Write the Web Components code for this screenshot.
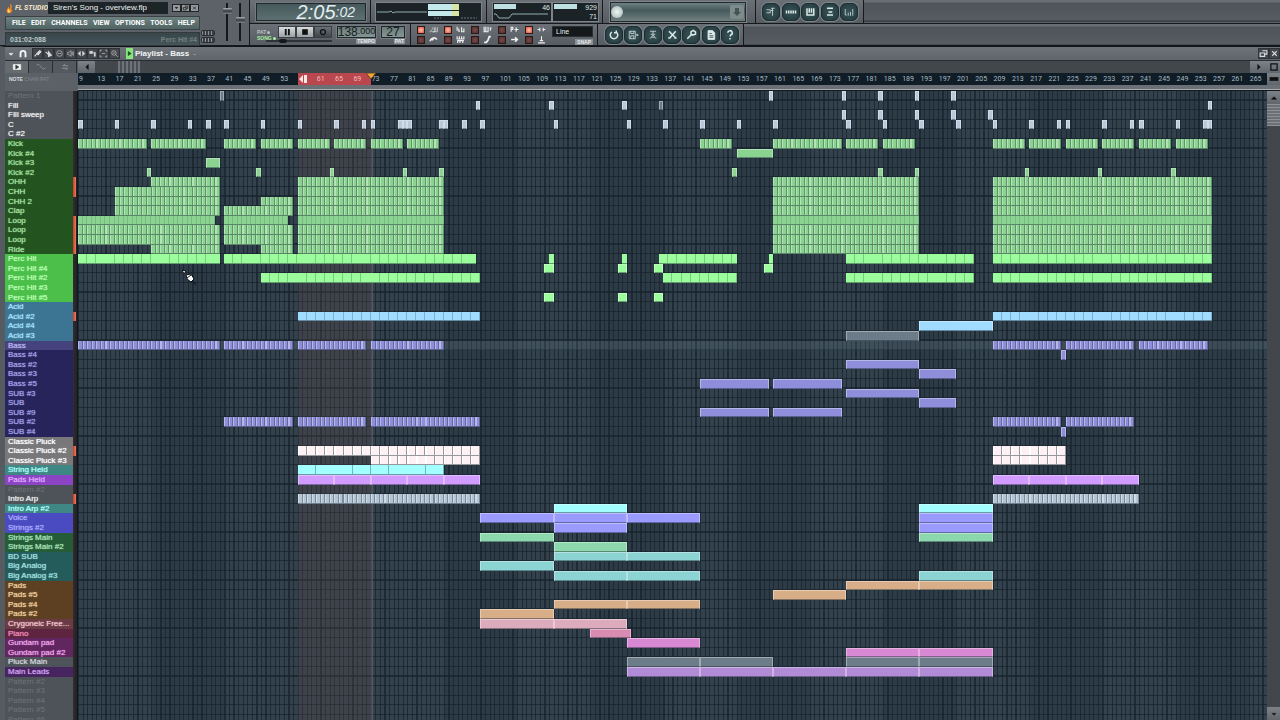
<!DOCTYPE html>
<html lang="en">
<head>
<meta charset="utf-8">
<title>FL Studio - Siren's Song</title>
<style>
html,body{margin:0;height:100%;overflow:hidden;background:#575d63}
body{font-family:"Liberation Sans",Arial,sans-serif}
</style>
</head>
<body>
<fl-app></fl-app>
<script>
const ICONS = {
  playlist:'<path d="M2 5h5v4H2M10 13V3M8 3h5M8 6h3"/>',
  steps:'<path d="M2 6v4M5 6v4M8 6v4M11 6v4M14 6v4" stroke-width="2"/>',
  piano:'<path d="M4 3v9h9V3M7 3v6M10 3v6" stroke-width="2"/>',
  browser:'<path d="M4 3h8M6 8h5M4 12h8" stroke-width="2"/>',
  mixer:'<path d="M3 4v8h2M7 9v4M10 8v5M13 4v9" />',
  undo:'<path d="M5 4a5 5 0 1 0 6 0M11 2v3H8" stroke-width="2"/>',
  save:'<path d="M3 3h8v10H3zM5 3v3h4V3M5 13V9h4v4M13 7l2 1-2 1z"/>',
  wave:'<path d="M4 3h8M8 3v4M5 7h6M8 8l-4 5M8 8l4 5M6 11h4"/>',
  cut:'<path d="M4 3l9 9M13 3L5 12M3 12h3M11 12h3" stroke-width="2"/>',
  wrench:'<path d="M3 13l6-6M8 7V4l3-2 3 2v3l-3 1z" stroke-width="2"/>',
  page:'<path d="M4 2h6l3 3v9H4z" fill="currentColor"/><path d="M6 6h3M6 9h5M6 11h5" stroke="#22383c"/>',
  help:'<path d="M5 5a3 3 0 1 1 4 3l-1 2M8 12v2" stroke-width="2"/>',
  down:'<path d="M5 7l3 3 3-3z" fill="currentColor"/>',
  magnet:'<path d="M4 13V7a4 4 0 0 1 8 0v6" stroke-width="3"/>',
  brush:'<path d="M3 13l4-5M7 8l5-5 2 2-5 5z" fill="currentColor" stroke-width="2"/>',
  pencil:'<path d="M3 5l6 6M8 5l5 6-5 2z" fill="currentColor" stroke-width="2"/>',
  none:'<circle cx="8" cy="8" r="5"/><path d="M5 8h6"/>',
  mute:'<path d="M3 6h2l4-3v10l-4-3H3zM11 5v6M13 4v8"/>',
  slip:'<path d="M6 4L2 8l4 4zM10 4l4 4-4 4z" fill="currentColor"/>',
  slice:'<path d="M3 4h5v4H3zM9 6h4v7h-2V9" fill="currentColor"/>',
  select:'<path d="M2 5V2h3M11 2h3v3M14 11v3h-3M5 14H2v-3M5 8h6"/>',
  zoom:'<circle cx="7" cy="7" r="4"/><path d="M10 10l4 4M5 7h4" />',
  pause:'<path d="M6 3v10M11 3v10" stroke-width="3"/>',
  stop:'<path d="M4 4h8v8H4z" fill="currentColor"/>',
  rec:'<circle cx="8" cy="8" r="4" stroke-width="2"/>',
  clip:'<path d="M2 4h12v8H2z" fill="currentColor"/><path d="M6 5l5 3-5 3z" fill="#333" stroke="#333"/>',
  curve:'<path d="M1 5c4-3 5 1 7 3s4 5 7 1"/>',
  swap:'<path d="M3 10h9l-3 3M13 6H5l3-3"/>',
  min:'<path d="M4 6h8l-4 4z" fill="currentColor"/>',
  max:'<path d="M6 3h8v6h-3M2 7h8v6H2z" stroke-width="2"/>',
  close:'<path d="M4 4l8 8M12 4l-8 8" stroke-width="2"/>',
  square:'<path d="M3 3h10v10H3z" stroke-width="2"/>',
  bar:'<path d="M1 8h14" stroke-width="6"/>',
  up:'<path d="M4 10h8L8 6z" fill="currentColor"/>',
  left:'<path d="M10 4v8L6 8z" fill="currentColor"/>',
  right:'<path d="M6 4v8l4-4z" fill="currentColor"/>',
  keys:'<path d="M1 12h3V8M6 12h4V4M7 4v5M12 4v8M15 4v8H6"/>',
  arcs:'<path d="M2 11c2-7 9-7 12-3M5 9l3-2" stroke-width="3"/>',
  notes:'<path d="M2 3v7M5 6v5h2M10 4v8h4V6" stroke-width="2"/>',
  rows:'<path d="M2 2v5h12V2M6 2v5M10 2v5M2 10h12M3 10v4M7 10v4M12 10v4" stroke-width="2"/>',
  grid3:'<path d="M2 3v9h7V3M5 3v9M12 6h3M13 4v6" stroke-width="2"/>',
  slope:'<path d="M2 13h4l3-4 2-6h3" stroke-width="3"/>',
  rplus:'<path d="M2 12V4h3v4H2M8 8h7M11 4v8" stroke-width="2"/>',
  arrow:'<path d="M2 8h10M9 4l4 4-4 4" stroke-width="3"/>',
  ends:'<path d="M1 8h5M10 8h5M5 5v6M11 5v6" stroke-width="2"/>',
  stand:'<path d="M8 2v8M5 10h6M2 14h12" stroke-width="2"/>'
};
const svg = n => `<svg viewBox="0 0 16 16" aria-hidden="true">${ICONS[n]}</svg>`;
const define = (name, markup, init) => customElements.define(name, class extends HTMLElement {
  connectedCallback() {
    if (this.shadowRoot) return;
    const root = this.attachShadow({mode:'open'});
    root.innerHTML = typeof markup === 'function' ? markup(this) : markup;
  }
});
const attr = (el, n, d = '') => el.getAttribute(n) ?? d;

/* Small button holding one icon; kind = round | flat | key | win | tab | fill */
define('fl-icon', el => `<style>
:host{display:block;width:12px;height:11px}
button{display:grid;place-items:center;width:100%;height:100%;padding:0;margin:0;border:0;background:none;color:inherit}
svg{width:10px;height:10px;fill:none;stroke:currentColor;stroke-width:1}
:host([kind=round]){width:18px;height:18px;color:#dce9e8}
:host([kind=round]) button{border-radius:6px;border:1px solid #1d2c2f;background:radial-gradient(#39555a,#22383c);box-shadow:0 0 0 1px #79868a}
:host([kind=round]) svg{width:12px;height:12px}
:host([kind=flat]){width:11px}
:host([kind=flat]) button{background:#43474c;border:1px solid #303438;color:#d8dcdd}
:host([kind=flat]) svg{width:9px;height:9px}
:host([kind=key]){width:18px;height:12px}
:host([kind=key]) button{background:linear-gradient(#d9dcde,#9ba1a5);color:#111;border:1px solid #3a4044}
:host([dim][kind=key]) button{background:linear-gradient(#6a7176,#3f4549)}
:host([kind=win]){width:9px;height:8px}
:host([kind=win]) button{background:#969b9f;color:#101416;border:1px solid #222}
:host([kind=win]) svg{width:7px;height:6px}
:host([kind=tab]){width:24px;height:12px}
:host([kind=tab]) button{background:#54595f;border-right:1px solid #2b2f33;color:#a9b0b4}
:host([kind=tab][on]) button{background:#646b71;color:#f2f4f4}
:host([kind=fill]){width:auto;height:auto}
:host([kind=fill]) button{background:linear-gradient(#7c8288,#60666c);color:#111}
</style><button aria-label="${attr(el,'name')}">${svg(attr(el,'name'))}</button>`);

define('fl-lcd', `<style>
:host{display:flex;align-items:center;justify-content:center;box-sizing:border-box;border:1px solid #20272b;background:linear-gradient(#46595c,#5c7072);color:#e4eeee;font-style:italic;box-shadow:0 0 0 1px #747b80}
</style><slot></slot>`);

/* Toolbar panel */
define('fl-panel', `<style>
:host{display:flex;align-items:center;box-sizing:border-box;height:100%;border-right:1px solid #16191c;border-bottom:1px solid #16191c;background:linear-gradient(#6b7076,#575c62)}
</style><slot></slot>`);

define('fl-main', `<style>
:host{display:flex;width:250px;box-sizing:border-box;background:#5d6268;border-right:1px solid #16191c;border-bottom:1px solid #16191c}
.left{width:193px;margin:2px 0 0 6px;display:flex;flex-direction:column;gap:3px}
.top{display:flex;align-items:center;height:12px}
.logo{display:flex;align-items:center;gap:2px;width:42px;height:12px;font:italic bold 7px Roboto,sans-serif;color:#f6e6c8;white-space:nowrap}
.logo svg{flex:none;width:7px;height:11px}
.title{flex:1;height:12px;line-height:12px;padding-left:5px;font-size:8px;color:#eef2f3;background:#1e2529;white-space:nowrap}
.win{display:flex;margin-left:4px}
nav{display:flex;justify-content:space-between;align-items:center;height:12px;padding:0 4px 0 6px;background:linear-gradient(#6c8180,#4f6463);box-shadow:0 0 0 1px #3a4043}
nav button{all:unset;font:bold 7px Roboto,sans-serif;color:#fff}
.hint{display:flex;justify-content:space-between;align-items:center;height:12px;margin-top:1px;padding:0 2px 0 4px;font-size:7px;font-weight:bold;color:#bfcac9;background:linear-gradient(#38464a,#45555a);box-shadow:0 0 0 1px #34393c}
.hint i{font-style:normal;color:#74817f}
.mid{width:16px;display:flex;flex-direction:column;justify-content:flex-end;gap:1px;padding:0 0 2px 2px;box-sizing:border-box}
.mid b{height:4px;border:1px solid #2a2e31;border-radius:2px;background:repeating-linear-gradient(90deg,#8d9498 0 1px,#3a3f43 1px 3px)}
.faders{display:flex;gap:1px;padding:3px 0 0 6px}
.faders input{appearance:none;writing-mode:vertical-lr;direction:rtl;width:12px;height:38px;margin:0;background:linear-gradient(90deg,transparent 5px,#16191c 5px 7px,transparent 7px)}
.faders input::-webkit-slider-thumb{appearance:none;width:9px;height:6px;background:linear-gradient(#aeb4b8,#33383b 50%,#7d8488);border-radius:1px}
</style>
<div class="left">
 <div class="top"><span class="logo"><svg viewBox="0 0 8 11"><path d="M5 0c2 2 2 4 1 6 2 1 1 4-2 5C1 11 0 9 1 7L3 3c0 2 1 2 1 3C6 4 4 2 5 0z" fill="#f58a1c"/><path d="M3 6c-2 2-1 4 1 4 1-1 0-2-1-4z" fill="#ffe17a"/></svg>FL STUDIO</span>
 <span class="title">Siren's Song - overview.flp</span>
 <span class="win"><fl-icon kind="win" name="min"></fl-icon><fl-icon kind="win" name="max"></fl-icon><fl-icon kind="win" name="close"></fl-icon></span></div>
 <nav><button>FILE</button><button>EDIT</button><button>CHANNELS</button><button>VIEW</button><button>OPTIONS</button><button>TOOLS</button><button>HELP</button></nav>
 <div class="hint"><span>031:02:088</span><i>Perc Hit #4</i></div>
</div>
<div class="mid"><b></b><b></b></div>
<div class="faders"><input type="range" value="84" aria-label="Main volume"><input type="range" value="56" aria-label="Main pitch"></div>`);

define('fl-transport', `<style>
:host{display:flex;align-items:center;gap:5px;width:160px;height:100%}
.col{display:flex;flex-direction:column;gap:1px}
.mode{display:flex;flex-direction:column;width:16px;margin-left:7px;font-size:5px;line-height:6px;font-weight:bold;color:#b9c0c3;white-space:nowrap}
.mode span:last-child{color:#a9f0a0}
.mode span::after{content:"";display:inline-block;width:3px;height:3px;border-radius:50%;background:currentColor;margin-left:1px}
.keys{display:flex}
input{appearance:none;width:66px;height:4px;margin:0 0 0 -12px;background:linear-gradient(transparent 1px,#2e3337 1px 3px,transparent 3px)}
input::-webkit-slider-thumb{appearance:none;width:8px;height:4px;border-radius:2px;background:#15181a}
fl-lcd{height:12px;font-size:12px;color:#16201f;font-style:normal;background:linear-gradient(#6b7b79,#859593)}
.t{width:39px}.p{width:24px}
small{font-size:9px;line-height:11px;align-self:end}
.cap{align-self:flex-end;font-size:5px;line-height:5px;font-weight:bold;color:#e3e7e9;background:#899095;padding:0 1px}
</style>
<div class="mode"><span>PAT</span><span>SONG</span></div>
<div class="col"><div class="keys"><fl-icon kind="key" name="pause"></fl-icon><fl-icon kind="key" name="stop"></fl-icon><fl-icon kind="key" dim name="rec"></fl-icon></div><input type="range" value="22" aria-label="Song position"></div>
<div class="col"><fl-lcd class="t">138<small>.000</small></fl-lcd><span class="cap">TEMPO</span></div>
<div class="col"><fl-lcd class="p">27</fl-lcd><span class="cap">PAT</span></div>`);

define('fl-switches', () => `<style>
:host{display:flex;align-items:center;width:186px;height:100%}
.g{display:grid;grid-template-columns:repeat(5,27px);row-gap:1px;margin-left:6px}
label{display:flex;align-items:center;gap:1px;color:#eef0f1}
input{appearance:none;width:8px;height:8px;margin:0;border:1px solid #2b1a1a;background:radial-gradient(#7c4a48,#4c2d2d)}
input:checked{background:radial-gradient(#ffc5b0,#e04b38)}
svg{width:15px;height:9px;fill:none;stroke:currentColor}
select{appearance:none;width:41px;height:11px;margin-bottom:9px;padding:0 3px;font:7px "Liberation Sans",sans-serif;color:#e5eaec;background:#15191c;border:1px solid #2c3033}
.s{display:flex;flex-direction:column;justify-content:center;padding-top:2px}
.s span{align-self:flex-end;margin-top:-7px;font-size:5px;line-height:6px;font-weight:bold;color:#e3e7e9;background:#899095;padding:0 2px}
</style><div class="g">${['keys*','notes*','grid3','rplus','ends*','arcs','rows','slope','arrow','stand'].map(n=>`<label><input type="checkbox" aria-label="${n.replace('*','')}" ${n.endsWith('*')?'checked':''}>${svg(n.replace('*',''))}</label>`).join('')}</div>
<div class="s"><select aria-label="Snap"><option>Line</option></select><span>SNAP</span></div>`);

define('fl-scope', `<style>
:host{display:block;width:105px;height:18px;margin:0 5px;background:#1c2326;box-shadow:0 0 0 1px #7d8489}
svg{display:block;width:100%;height:100%}
</style><svg viewBox="0 0 105 18" preserveAspectRatio="none"><path d="M1 9h12l2-1 2 2 2-1h32" stroke="#92aeb0" fill="none"/><path d="M52 1h24v6H52zM52 8h24v5H52z" fill="#c3e9ec"/><path d="M76 1h7v6h-7zM76 8h7v5h-7z" fill="#d8e6a5"/><path d="M58 15h7M85 15h16" stroke="#667477" stroke-dasharray="2 1"/></svg>`);

define('fl-cpu', `<style>
:host{display:grid;grid-template-columns:58px 45px;gap:2px;width:105px;height:18px;margin:0 4px 0 6px}
div{display:grid;grid-template-rows:9px 9px;box-sizing:border-box;padding-right:1px;background:#1c2326;box-shadow:0 0 0 1px #7d8489;color:#dfe8ea;font-size:7px;line-height:9px;text-align:right}
.a{background:linear-gradient(#bfe0e3,#bfe0e3) 1px 1px/22px 5px no-repeat #1c2326}
.b{background:linear-gradient(#bfe0e3,#bfe0e3) 1px 1px/23px 5px no-repeat #1c2326}
svg{width:57px;height:9px}
</style><div class="a"><span>46</span><svg viewBox="0 0 57 9"><path d="M1 2h2l3 4h10l3-4h36" stroke="#92aeb0" fill="none"/></svg></div><div class="b"><span>929</span><span>71</span></div>`);

define('fl-toolbar', `<style>
:host{display:flex;height:46px;background:#50565c}
.rows{flex:1;display:grid;grid-template-rows:24px 22px;min-width:0}
.row{display:flex;min-width:0}
.time{width:110px;height:18px;margin-left:6px;font-size:20px;line-height:18px;padding-right:10px;justify-content:flex-end}
.time small{font-size:14px;align-self:end;line-height:15px}
.p1{width:121px}
.hint{width:153px}
.long{appearance:none;flex:1;height:18px;margin:0 9px 0 7px;border:1px solid #23292c;background:linear-gradient(#6f8282,#46595b 40%,#70807f);box-shadow:0 0 0 1px #7d8489}
.long::-webkit-slider-thumb{appearance:none;width:12px;height:12px;border-radius:50%;background:radial-gradient(#eef6f4,#9fb2b0)}
.slide{display:grid;flex:1;align-items:center}
.slide>*{grid-area:1/1}
.slide svg{justify-self:end;width:14px;height:14px;margin-right:11px;background:#7d8c8b;border-radius:2px}
.w{width:108px;padding:0 5px 0 6px;justify-content:space-between}
.f{width:146px;padding:0 4px 0 7px;justify-content:space-between}
.rest{flex:1;border-bottom:1px solid #16191c;background:linear-gradient(#686e74 2px,#4e545a 3px,#565c62 20px,#30353a 21px,#686e74)}
</style>
<fl-main></fl-main>
<div class="rows">
<div class="row">
<fl-panel class="p1"><fl-lcd class="time">2:05<small>:02</small></fl-lcd></fl-panel>
<fl-panel><fl-scope></fl-scope></fl-panel><fl-panel><fl-cpu></fl-cpu></fl-panel>
<fl-panel class="hint"><div class="slide"><input class="long" type="range" value="0" aria-label="Hint"><svg viewBox="0 0 14 14"><path d="M5 3h4v4h2l-4 4-4-4h2z" fill="#455556"/></svg></div></fl-panel>
<fl-panel class="w"><fl-icon kind="round" name="playlist"></fl-icon><fl-icon kind="round" name="steps"></fl-icon><fl-icon kind="round" name="piano"></fl-icon><fl-icon kind="round" name="browser"></fl-icon><fl-icon kind="round" name="mixer"></fl-icon></fl-panel>
<div class="rest"></div></div>
<div class="row">
<fl-panel><fl-transport></fl-transport></fl-panel><fl-panel><fl-switches></fl-switches></fl-panel>
<fl-panel class="f"><fl-icon kind="round" name="undo"></fl-icon><fl-icon kind="round" name="save"></fl-icon><fl-icon kind="round" name="wave"></fl-icon><fl-icon kind="round" name="cut"></fl-icon><fl-icon kind="round" name="wrench"></fl-icon><fl-icon kind="round" name="page"></fl-icon><fl-icon kind="round" name="help"></fl-icon></fl-panel>
<div class="rest"></div></div>
</div>`);

/* Bars are counted from the first visible bar; the view is 260 bars wide */
const BARS = 260;
const C = {
  hit:'#b9c9da', kick:'#8bd390', perc:'#9bfd9b', acid:'#9fdcff', bass:'#8f8edb', white:'#fdf1f6',
  cyan:'#a3feff', purple:'#d29bff', arp:'#b4c4d4', voice:'#9b9bff', string:'#8cd8ac', teal:'#8cd3d3',
  pad:'#d8ae88', cryg:'#dcacbd', piano:'#d98cb2', gund:'#d988d3', grey:'#6c7c88', lead:'#b18bd6'
};
/* name, [label background, label colour], clip colour, stripe style, clips "start-end", activity marker */
const G=['#4d5358','#eceeee'], K=['#235420','#a6e2a0'], P=['#4bbf49','#b9ffb4'], A=['#3c7594','#a5e2ff'],
 B=['#26245b','#a39fe6'], W=['#78787a','#fff'], N=['#4d5358','#6d7479'], S=['#255c38','#a9e6b9'], T=['#245c5c','#a0e0e0'], D=['#5d4022','#f0cf9c'], V=['#4a4bc0','#a9aaff'], U=['#612660','#f0a5ec'];
const one = s => s.split(' ').map(n => n.startsWith('g') ? `${n}-${+n.slice(1)+1}` : `${n}-${+n+1}`).join(' ');
const big = ' 48-80 152-184 200-248';
const TRACKS = [
 ['Pattern 1',N,'hit','',one('g31 151 167 175 183 191')],
 ['Fill',G,'hit','',one('87 103 119 g127 247')],
 ['FIll sweep',G,'hit','',one('167 175 183 191 199')],
 ['C',G,'hit','',one('0 8 16 24 28 32 40 48 56 62 64 70 71 72 79 80 84 88 104 120 128 136 144 152 168 176 184 192 200 208 214 216 224 230 232 240 246 247')],
 ['C #2',G,'hit','',''],
 ['Kick',K,'kick','s','0-15 16-28 32-39 40-47 48-55 56-63 64-71 72-79 136-143 152-167 168-175 176-183 200-207 208-215 216-223 224-231 232-239 240-247'],
 ['Kick #4',K,'kick','','144-152'],
 ['Kick #3',K,'kick','','28-31'],
 ['Kick #2',K,'kick','',one('15 39 55 71 79 143 175 183 207 223 239')],
 ['OHH',K,'kick','s','16-31'+big,1],
 ['CHH',K,'kick','s','8-31'+big,1],
 ['CHH 2',K,'kick','s','8-31 40-47'+big],
 ['Clap',K,'kick','s','8-31 32-47'+big],
 ['Loop',K,'kick','f','0-30 32-46'+big,1],
 ['Loop',K,'kick','s','0-31 32-47'+big,1],
 ['Loop',K,'kick','s','0-31 32-47'+big,1],
 ['Ride',K,'kick','s','16-31 40-47'+big,1],
 ['Perc Hit',P,'perc','d','0-31 32-87 103-104 119-120 127-144 151-152 168-196 200-248'],
 ['Perc Hit #4',P,'perc','','102-104 118-120 126-128 150-152'],
 ['Perc Hit #2',P,'perc','d','40-88 128-144 168-196 200-248'],
 ['Perc Hit #3',P,'perc','',''],
 ['Perc Hit #5',P,'perc','','102-104 118-120 126-128'],
 ['Acid',A,'acid','',''],
 ['Acid #2',A,'acid','d','48-88 200-248',1],
 ['Acid #4',A,'acid','','184-200'],
 ['Acid #3',A,'acid','','g168-184'],
 ['Bass',['#45437e','#b9b5f2'],'bass','s','0-31 32-47 48-63 64-80 200-215 216-231 232-247'],
 ['Bass #4',B,'bass','','215-216'],
 ['Bass #2',B,'bass','','168-184'],
 ['Bass #3',B,'bass','','184-192'],
 ['Bass #5',B,'bass','','136-151 152-167'],
 ['SUB #3',B,'bass','','168-184'],
 ['SUB',B,'bass','','184-192'],
 ['SUB #9',B,'bass','','136-151 152-167'],
 ['SUB #2',B,'bass','s','32-47 48-63 64-88 200-215 216-231'],
 ['SUB #4',B,'bass','','215-216'],
 ['Classic Pluck',W,'white','',''],
 ['Classic Pluck #2',W,'white','w','48-88 200-216',1],
 ['Classic Pluck #3',W,'white','w','64-88 200-216'],
 ['String Held',['#3f8785','#a9fffb'],'cyan','q','48-80'],
 ['Pads Held',['#8b44c4','#e0a8ff'],'purple','','48-56 56-64 64-72 72-80 80-88 200-208 208-216 216-224 224-232'],
 ['Pattern #2',N,'hit','',''],
 ['Intro Arp',G,'arp','s','48-88 200-232',1],
 ['Intro Arp #2',['#3f8785','#a9fffb'],'cyan','','104-120 184-200'],
 ['Voice',V,'voice','','88-104 104-120 120-136 184-200'],
 ['Strings #2',V,'voice','','104-120 184-200'],
 ['Strings Main',S,'string','','88-104 184-200'],
 ['Strings Main #2',S,'string','','104-120'],
 ['BD SUB',T,'teal','','104-120 120-136'],
 ['Big Analog',T,'teal','','88-104'],
 ['Big Analog #3',T,'teal','','104-120 120-136 184-200'],
 ['Pads',D,'pad','','168-184 184-200'],
 ['Pads #5',D,'pad','','152-168'],
 ['Pads #4',D,'pad','','104-120 120-136'],
 ['Pads #2',D,'pad','','88-104'],
 ['Crygoneic Free...',['#6b3b45','#f2c3cc'],'cryg','','88-104 104-120'],
 ['Piano',['#5e2440','#f08db8'],'piano','','112-121'],
 ['Gundam pad',U,'gund','','120-136'],
 ['Gundam pad #2',U,'gund','','168-184 184-200'],
 ['Pluck Main',['#4d5358','#cdd5d6'],'grey','','g120-136 g136-152 g168-184 g184-200'],
 ['Main Leads',['#45245f','#cf9ff0'],'lead','','120-136 136-152 152-168 168-184 184-200'],
 ['Pattern #2',N,'hit','',''],['Pattern #3',N,'hit','',''],['Pattern #4',N,'hit','',''],['Pattern #5',N,'hit','',''],['Pattern #6',N,'hit','','']
];

/* One playlist row: label, activity marker and a lane of clips */
define('fl-track', el => {
  const [name,[bg,fg],col,style,clips,mark] = TRACKS[+attr(el,'index')];
  const c = clips ? clips.split(' ').map(t => {
    const grey = t[0]==='g', [a,b] = t.replace('g','').split('-').map(Number), n = b-a;
    return `<i class="${style} ${grey?'grey':''}" style="grid-column:${a+1}/span ${n};--n:${n}"></i>`;
  }).join('') : '';
  return `<style>
:host{display:grid;grid-template-columns:68px 5px 1fr;min-height:0}
.n{background:${bg};color:${fg};font-size:8px;line-height:9px;padding-left:3px;white-space:nowrap;${bg===N[0]&&fg===N[1]?'':'text-shadow:0 0 1px currentColor'}}
.m{background:#20252a;border-right:1px solid #11171b;box-sizing:border-box;padding-right:1px}
.m b{display:block;height:100%;background:${mark?'linear-gradient(90deg,#c73f2a,#f0775a)':'linear-gradient(90deg,#3a2a2c,#20252a)'}}
.l{display:grid;grid-template-columns:repeat(${BARS},minmax(0,1fr));grid-template-rows:minmax(0,1fr);min-height:0}
i{box-sizing:border-box;background:var(--c);--c:${C[col]};--p:calc(100% / var(--n));--h:color-mix(in srgb,var(--c),#fff 35%);--k:color-mix(in srgb,var(--c),#1a3030 38%);border:1px solid var(--h);border-bottom-color:color-mix(in srgb,var(--c),#1a2832 45%)}
i.s,i.f,i.d,i.w,i.q{border-width:0 0 1px}
i.s{background:repeating-linear-gradient(90deg,var(--h) 0 calc(var(--p)*.24),var(--c) calc(var(--p)*.24) calc(var(--p)*.78),var(--k) calc(var(--p)*.78) var(--p))}
i.f{background:repeating-linear-gradient(90deg,var(--c) 0 calc(var(--p)*.78),color-mix(in srgb,var(--c),#1a3030 15%) calc(var(--p)*.78) var(--p))}
i.d{background:repeating-linear-gradient(90deg,var(--c) 0 calc(var(--p)*1.8),color-mix(in srgb,var(--c),#1a3030 25%) calc(var(--p)*1.8) calc(var(--p)*2))}
i.w{background:repeating-linear-gradient(90deg,#fff 0 calc(var(--p)*.3),var(--c) calc(var(--p)*.3) calc(var(--p)*1.8),#999 calc(var(--p)*1.8) calc(var(--p)*2))}
i.q{background:repeating-linear-gradient(90deg,var(--c) 0 calc(var(--p)*3.8),color-mix(in srgb,var(--c),#1a3030 35%) calc(var(--p)*3.8) calc(var(--p)*4))}
i.grey{--c:#6c7c88}
${name==='Bass'?'.l{background:#a0b4c022}':''}
</style><span class="n">${name}</span><span class="m"><b></b></span><div class="l">${c}</div>`;
});

define('fl-grid', () => `<style>
:host{display:grid;flex:1;min-height:0;overflow:hidden;position:relative;background:#2e3d48}
.bg,.rows{grid-area:1/1;height:672px}
.bg{margin-left:73px;display:grid;grid-template-columns:48fr 16fr 196fr;background:
 repeating-linear-gradient(#0000 0 calc(100%/70*.87),#15212bb0 calc(100%/70*.87) calc(100%/70)),
 repeating-linear-gradient(90deg,#15212bb0 0 calc(100%/${BARS}*.26),#0000 calc(100%/${BARS}*.26) calc(100%/${BARS})),
 repeating-linear-gradient(90deg,#32414c 0 calc(100%/${BARS}*16),#2d3b46 calc(100%/${BARS}*16) calc(100%/${BARS}*32))}
.sel{grid-column:2;background:#c07c6c1f;border-right:2px solid #8b8f9044;margin-right:-2px}
.rows{display:grid;grid-template-rows:repeat(70,minmax(0,1fr))}
.cur{position:absolute;left:177px;top:178px;width:14px;height:16px}
</style><div class="bg"><div class="sel"></div></div>
<div class="rows">${TRACKS.map((t,i)=>`<fl-track index="${i}"></fl-track>`).join('')}</div>
<svg class="cur" viewBox="0 0 14 16"><path d="M0 1l4 1-2 3z" fill="#fff" stroke="#0a0f12"/><path d="M4 6l5-1 3 5-3 3-4-3z" fill="#fff" stroke="#0a0f12"/><path d="M5 9l4-3M11 12l3 4" stroke="#0a0f12"/></svg>`);

define('fl-ruler', () => `<style>
:host{display:block;position:relative;height:12px;background:#101d26}
.r{display:grid;grid-template-columns:repeat(65,minmax(0,1fr));height:12px}
span{font:7px/12px Roboto,sans-serif;color:#a9bbc4;padding-left:1px;white-space:nowrap}
.on{background:#b9474d;color:#f3bdbd}
.first{display:flex;align-items:center}
.first svg{position:static;width:8px;height:8px}
svg{position:absolute;left:calc(100%*64/260 - 5px);top:0;width:10px;height:6px}
</style><div class="r">${Array.from({length:65},(_,i)=>i===12?'<span class="on first"><svg viewBox="0 0 8 8"><path d="M4 0v8L0 4zM5 0h3v8H5z" fill="#fbe6e6"/></svg></span>':`<span class="${i>11&&i<16?'on':''}">${9+i*4}</span>`).join('')}</div>
<svg viewBox="0 0 10 6"><path d="M0 0h10L5 6z" fill="#f2a93c" stroke="#6b4010"/></svg>`);

define('fl-playlist', `<style>
:host{display:flex;flex:1;flex-direction:column;min-height:0;border-left:5px solid #555b61;border-top:1px solid #111519}
.title{display:flex;align-items:center;height:13px;background:linear-gradient(#6d7379,#5f656b);border-bottom:1px solid #282d31;color:#f3f5f5;font-size:8px;font-weight:bold}
.title .gap{width:3px}
.go{width:7px;height:11px;margin:0 2px 0 6px;display:grid;place-items:center;background:#86e57c;color:#1c4a1c}
.go svg{width:7px;height:7px;stroke:currentColor}
.fill{flex:1}
.title small{font-size:8px;margin-left:4px;color:#9aa0a5}
.mid{display:grid;grid-template-columns:73px 1fr 13px;grid-template-rows:12px 12px 6px}
.tabs{display:flex;background:#54595f}
.bar{display:flex;background:#42474c}
.bar .a{width:17px}
.bar .thumb{width:22px;margin-left:23px;background:repeating-linear-gradient(90deg,#6d7378 0 2px,#4a4f54 2px 4px)}
.note{grid-row:2/4;background:#5b6167;color:#d9dddf;font:bold 5px/13px "Liberation Sans",sans-serif;padding-left:4px}
.note i{font-style:normal;color:#787e84}
.sep{background:linear-gradient(#6a7076 4px,#a9adb0 4px 5px,#14191d 5px)}
.body{display:flex;flex:1;min-height:0}
.scroll{width:13px;display:flex;flex-direction:column;background:#43474c}
.scroll .b{height:13px}.scroll .t{height:22px;background:repeating-linear-gradient(#8d9298 0 1px,#6a7076 1px 3px)}
</style>
<div class="title"><fl-icon name="down"></fl-icon><fl-icon name="magnet"></fl-icon><span class="gap"></span>
<fl-icon kind="flat" name="brush"></fl-icon><fl-icon kind="flat" name="pencil"></fl-icon><fl-icon kind="flat" name="none"></fl-icon><fl-icon kind="flat" name="mute"></fl-icon><fl-icon kind="flat" name="slip"></fl-icon><fl-icon kind="flat" name="slice"></fl-icon><fl-icon kind="flat" name="select"></fl-icon><fl-icon kind="flat" name="zoom"></fl-icon>
<span class="go"><svg viewBox="0 0 16 16"><path d="M5 3l7 5-7 5z" fill="currentColor"/></svg></span><span>Playlist - Bass</span><small>-</small><span class="fill"></span>
<fl-icon kind="flat" name="max"></fl-icon><fl-icon kind="flat" name="close"></fl-icon></div>
<div class="mid">
<div class="tabs"><fl-icon kind="tab" on name="clip"></fl-icon><fl-icon kind="tab" name="curve"></fl-icon><fl-icon kind="tab" name="swap"></fl-icon></div>
<div class="bar"><fl-icon kind="fill" class="a" name="left"></fl-icon><div class="thumb"></div><span class="fill"></span><fl-icon kind="fill" class="a" name="right"></fl-icon></div>
<fl-icon kind="fill" name="square"></fl-icon>
<div class="note">NOTE <i>CHAN PAT</i></div><fl-ruler></fl-ruler><fl-icon kind="fill" name="bar"></fl-icon>
<div class="sep"></div><div class="sep"></div>
</div>
<div class="body"><fl-grid></fl-grid><div class="scroll"><fl-icon kind="fill" class="b" name="up"></fl-icon><div class="t"></div><span class="fill"></span><fl-icon kind="fill" class="b" name="down"></fl-icon></div></div>`);

define('fl-app', `<style>
:host{display:flex;flex-direction:column;height:100vh;overflow:hidden}
</style><fl-toolbar></fl-toolbar><fl-playlist></fl-playlist>`);
</script>
</body>
</html>
